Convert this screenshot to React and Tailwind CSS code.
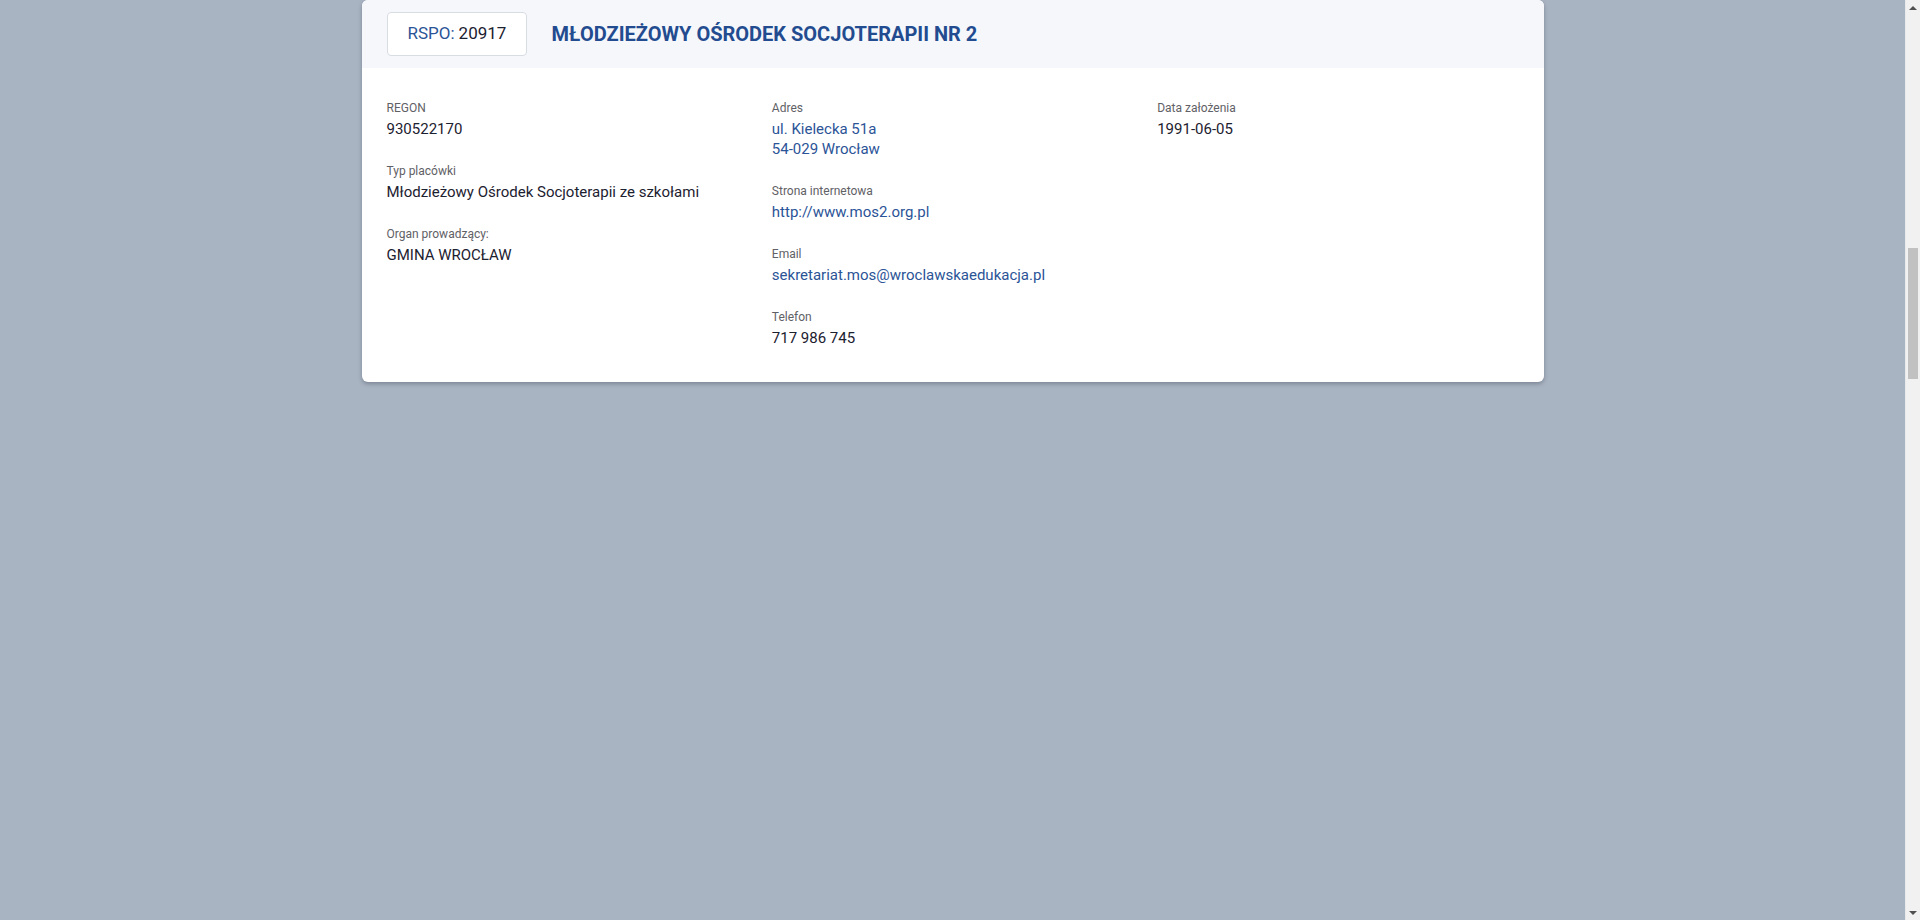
import React from 'react'

const COLUMNS = [
  [
    { label: 'REGON', lines: ['930522170'] },
    { label: 'Typ placówki', lines: ['Młodzieżowy Ośrodek Socjoterapii ze szkołami'] },
    { label: 'Organ prowadzący:', lines: ['GMINA WROCŁAW'] },
  ],
  [
    { label: 'Adres', lines: ['ul. Kielecka 51a', '54-029 Wrocław'], link: true },
    { label: 'Strona internetowa', lines: ['http://www.mos2.org.pl'], link: true },
    { label: 'Email', lines: ['sekretariat.mos@wroclawskaedukacja.pl'], link: true },
    { label: 'Telefon', lines: ['717 986 745'] },
  ],
  [
    { label: 'Data założenia', lines: ['1991-06-05'] },
  ],
]

function Field({ label, lines, link }) {
  return (
    <div>
      <div className="text-xs leading-4 text-[#5f6166]">{label}</div>
      <div className={`mt-[3px] text-[15px] leading-5 ${link ? 'text-[#2b5497]' : 'text-[#1c2130]'}`}>
        {lines.map((l) => (
          <div key={l}>{l}</div>
        ))}
      </div>
    </div>
  )
}

function Scrollbar() {
  return (
    <div className="w-[15px] h-full flex flex-col bg-[#f1f1f1] border-l border-[#e9e9e9]">
      <div className="h-[15px] flex items-center justify-center">
        <div className="w-0 h-0 border-l-[4px] border-r-[4px] border-b-[4px] border-l-transparent border-r-transparent border-b-[#505050]" />
      </div>
      <div className="h-[233px]" />
      <div className="h-[131px] mx-[2px] bg-[#c1c1c1]" />
      <div className="flex-1" />
      <div className="h-[15px] flex items-center justify-center">
        <div className="w-0 h-0 border-l-[4px] border-r-[4px] border-t-[4px] border-l-transparent border-r-transparent border-t-[#505050]" />
      </div>
    </div>
  )
}

export default function App() {
  return (
    <div className="h-screen w-full flex overflow-hidden bg-[#a9b4c2]" style={{ fontFamily: 'Roboto, "Liberation Sans", sans-serif' }}>
      <main className="flex-1 flex justify-center">
        <div className="w-[1182px] self-start bg-white rounded-md shadow-[0_2px_4px_rgba(40,50,70,0.35)] overflow-hidden">
          {/* Header */}
          <div className="flex items-center gap-6 px-[25px] py-3 bg-[#f5f7fb]">
            <div className="h-[44px] px-5 flex items-center border border-[#d8dce3] rounded-[4px] bg-white text-[17px]">
              <span className="text-[#2b5497]">RSPO:</span>
              <span className="ml-1 text-[#1c2130]">20917</span>
            </div>
            <h1 className="text-xl font-bold text-[#234b8f]">MŁODZIEŻOWY OŚRODEK SOCJOTERAPII NR 2</h1>
          </div>

          {/* Details */}
          <div className="grid grid-cols-3 gap-x-6 px-[25px] pt-8 pb-[34px]">
            {COLUMNS.map((col, i) => (
              <div key={i} className="flex flex-col gap-6">
                {col.map((f) => (
                  <Field key={f.label} {...f} />
                ))}
              </div>
            ))}
          </div>
        </div>
      </main>
      <Scrollbar />
    </div>
  )
}
